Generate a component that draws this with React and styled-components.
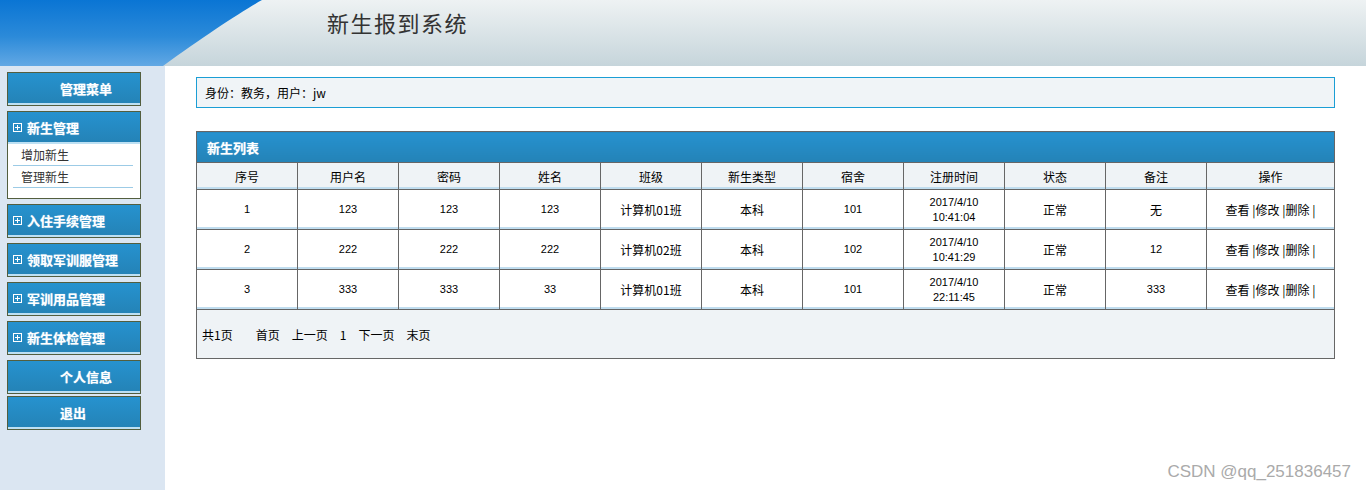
import React from 'react';
import styled, { createGlobalStyle } from 'styled-components';

const GlobalStyle = createGlobalStyle`
  html, body {
    margin: 0;
    padding: 0;
    background: #ffffff;
    font-family: "Liberation Sans", "Noto Sans CJK SC", sans-serif;
  }
`;

const Page = styled.div`
  position: relative;
  width: 1366px;
  height: 490px;
  overflow: hidden;
  display: flex;
  flex-direction: column;
`;

const Header = styled.div`
  height: 66px;
  display: flex;
  align-items: flex-start;
  background: linear-gradient(#eef2f3, #c6d5db);
  flex-shrink: 0;
`;

const Title = styled.h1`
  margin: 6px 0 0 57px;
  font-family: "Noto Sans CJK SC", sans-serif;
  font-weight: 400;
  font-size: 22px;
  letter-spacing: 1.5px;
  color: #333333;
`;

const Body = styled.div`
  flex: 1;
  display: flex;
`;

const Sidebar = styled.div`
  width: 165px;
  flex-shrink: 0;
  background: #dbe6f2;
  padding: 6px 0 0 7px;
  box-sizing: border-box;
  display: flex;
  flex-direction: column;
`;

const MenuBox = styled.div`
  width: 134px;
  box-sizing: border-box;
  border: 1px solid #535e3e;
  margin-bottom: ${p => p.$gap ?? 5}px;
  background: #ffffff;
`;

const MenuHead = styled.div`
  height: 30px;
  border-bottom: 2px solid #bde0f3;
  background: linear-gradient(#2692cf, #2483b7);
  display: flex;
  align-items: center;
  gap: 5px;
  padding-left: ${p => (p.$center ? 52 : 5)}px;
  color: #ffffff;
  font-weight: 700;
  font-size: 13px;
  font-family: "Noto Sans CJK SC", sans-serif;
  text-shadow: 0 0 1px rgba(255, 255, 255, 0.6);
`;

const SubList = styled.div`
  padding: 0 7px 10px 5px;
`;

const SubItem = styled.div`
  height: 21px;
  line-height: 21px;
  border-bottom: 1px solid #9ccbe6;
  padding-left: 8px;
  font-size: 12px;
  color: #333333;
  font-family: "Noto Sans CJK SC", sans-serif;
`;

const Main = styled.div`
  flex: 1;
  padding: 11px 31px 0 31px;
  display: flex;
  flex-direction: column;
  gap: 23px;
`;

const InfoBar = styled.div`
  height: 29px;
  border: 1px solid #1b9ed5;
  background: #f0f4f7;
  display: flex;
  align-items: center;
  padding-left: 8px;
  font-size: 12px;
  color: #000000;
  font-family: "Noto Sans CJK SC", sans-serif;
`;

const Table = styled.table`
  width: 100%;
  border-collapse: collapse;
  border: 1px solid #666666;
  table-layout: fixed;
  font-family: "Noto Sans CJK SC", sans-serif;
`;

const Caption = styled.td`
  height: 30px;
  padding: 0 0 0 10px;
  background: linear-gradient(#2692cf, #2483b7);
  color: #ffffff;
  font-weight: 700;
  font-size: 13px;
  text-shadow: 0 0 1px rgba(255, 255, 255, 0.6);
  border: 1px solid #666666;
`;

const Th = styled.th`
  height: 26px;
  padding: 0;
  background: #eff3f6;
  font-weight: 400;
  font-size: 12px;
  color: #000000;
  border: 1px solid #666666;
  box-shadow: inset 0 -2px 0 #c0ddef;
`;

const Td = styled.td`
  height: 39px;
  padding: 0;
  text-align: center;
  background: #ffffff;
  font-size: ${p => (p.$num ? 11 : 12)}px;
  line-height: 15px;
  font-family: ${p => (p.$num ? '"Liberation Sans", sans-serif' : '"Noto Sans CJK SC", sans-serif')};
  color: #000000;
  border: 1px solid #666666;
  box-shadow: inset 0 -2px 0 #c0ddef;
  white-space: pre;
`;

const Pager = styled.td`
  height: 48px;
  padding: 0 0 0 5px;
  background: #eff3f6;
  font-size: 12px;
  color: #000000;
  border: 1px solid #666666;
`;

const PagerLink = styled.span`
  margin-right: ${p => p.$gap}px;
`;

const Watermark = styled.div`
  position: absolute;
  right: 15px;
  bottom: 8px;
  font-family: "Liberation Sans", sans-serif;
  font-size: 17px;
  color: #aaaaaa;
`;

function PlusIcon() {
  return (
    <svg width="9" height="9" viewBox="0 0 9 9">
      <rect x="0.5" y="0.5" width="8" height="8" fill="none" stroke="#fff" />
      <path d="M2 4.5H7M4.5 2V7" stroke="#fff" strokeWidth="1" />
    </svg>
  );
}

function HeaderArt() {
  return (
    <svg width="270" height="66" viewBox="0 0 270 66">
      <defs>
        <linearGradient id="hb" x1="0" y1="0" x2="0" y2="1">
          <stop offset="0" stopColor="#0a75d4" />
          <stop offset="0.55" stopColor="#2b8ad9" />
          <stop offset="1" stopColor="#62a8e4" />
        </linearGradient>
      </defs>
      <path d="M0 0H262C244 10 204 36 163 66H0Z" fill="url(#hb)" />
    </svg>
  );
}

const groups = ['入住手续管理', '领取军训服管理', '军训用品管理', '新生体检管理'];

const columns = ['序号', '用户名', '密码', '姓名', '班级', '新生类型', '宿舍', '注册时间', '状态', '备注', '操作'];

const rows = [
  { id: 1, user: '123', pwd: '123', name: '123', cls: '计算机01班', type: '本科', room: '101', date: '2017/4/10', time: '10:41:04', note: '无' },
  { id: 2, user: '222', pwd: '222', name: '222', cls: '计算机02班', type: '本科', room: '102', date: '2017/4/10', time: '10:41:29', note: '12' },
  { id: 3, user: '333', pwd: '333', name: '33', cls: '计算机01班', type: '本科', room: '101', date: '2017/4/10', time: '22:11:45', note: '333' },
];

export default function App() {
  return (
    <Page>
      <GlobalStyle />
      <Header>
        <HeaderArt />
        <Title>新生报到系统</Title>
      </Header>
      <Body>
        <Sidebar>
          <MenuBox>
            <MenuHead $center>管理菜单</MenuHead>
          </MenuBox>
          <MenuBox>
            <MenuHead><PlusIcon />新生管理</MenuHead>
            <SubList>
              <SubItem>增加新生</SubItem>
              <SubItem>管理新生</SubItem>
            </SubList>
          </MenuBox>
          {groups.map(g => (
            <MenuBox key={g}>
              <MenuHead><PlusIcon />{g}</MenuHead>
            </MenuBox>
          ))}
          <MenuBox $gap={2}>
            <MenuHead $center>个人信息</MenuHead>
          </MenuBox>
          <MenuBox>
            <MenuHead $center>退出</MenuHead>
          </MenuBox>
        </Sidebar>
        <Main>
          <InfoBar>身份：教务，用户：jw</InfoBar>
          <Table>
            <colgroup>
              {columns.map((c, i) => (
                <col key={c} style={i < 10 ? { width: 101 } : undefined} />
              ))}
            </colgroup>
            <tbody>
              <tr><Caption colSpan={11}>新生列表</Caption></tr>
              <tr>
                {columns.map(c => <Th key={c}>{c}</Th>)}
              </tr>
              {rows.map(r => (
                <tr key={r.id}>
                  <Td $num>{r.id}</Td>
                  <Td $num>{r.user}</Td>
                  <Td $num>{r.pwd}</Td>
                  <Td $num>{r.name}</Td>
                  <Td>{r.cls}</Td>
                  <Td>{r.type}</Td>
                  <Td $num>{r.room}</Td>
                  <Td $num>{r.date}<br />{r.time}</Td>
                  <Td>正常</Td>
                  <Td $num={r.note !== '无'}>{r.note}</Td>
                  <Td>{'查看 |修改 |删除 |'}</Td>
                </tr>
              ))}
              <tr>
                <Pager colSpan={11}>
                  <PagerLink $gap={23}>共1页</PagerLink>
                  <PagerLink $gap={12}>首页</PagerLink>
                  <PagerLink $gap={12}>上一页</PagerLink>
                  <PagerLink $gap={12}>1</PagerLink>
                  <PagerLink $gap={12}>下一页</PagerLink>
                  <PagerLink $gap={0}>末页</PagerLink>
                </Pager>
              </tr>
            </tbody>
          </Table>
        </Main>
      </Body>
      <Watermark>CSDN @qq_251836457</Watermark>
    </Page>
  );
}
